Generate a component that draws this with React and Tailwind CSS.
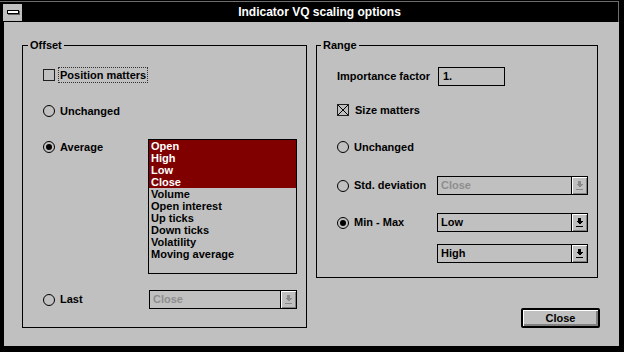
import React from "react";

function Radio({ checked }) {
  return (
    <span className="w-[12px] h-[12px] rounded-full border border-black flex items-center justify-center shrink-0 bg-[#c0c0c0]">
      {checked && <span className="w-[6px] h-[6px] rounded-full bg-black" />}
    </span>
  );
}

function Check({ checked }) {
  return (
    <span className="w-[12px] h-[12px] border border-[#202020] shrink-0 flex items-center justify-center">
      {checked && (
        <svg width="10" height="10" viewBox="0 0 10 10" shapeRendering="crispEdges">
          <line x1="0" y1="0" x2="10" y2="10" stroke="#000" strokeWidth="1" />
          <line x1="10" y1="0" x2="0" y2="10" stroke="#000" strokeWidth="1" />
        </svg>
      )}
    </span>
  );
}

function Arrow({ disabled }) {
  const c = disabled ? "#8a8a8a" : "#000";
  return (
    <svg width="7" height="9" viewBox="0 0 7 9" shapeRendering="crispEdges">
      <rect x="2" y="0" width="3" height="3" fill={c} />
      <polygon points="0,3 7,3 3.5,6.5" fill={c} />
      <rect x="0" y="8" width="7" height="1" fill={c} />
    </svg>
  );
}

function Combo({ text, disabled, w = "w-[151px]" }) {
  return (
    <div className={`${w} h-[19px] border border-black flex items-stretch bg-[#c0c0c0] shrink-0`}>
      <span className={`flex-1 pl-[3px] leading-[17px] ${disabled ? "text-[#8e8e8e]" : "text-black"}`}>{text}</span>
      <span className="w-[16px] border-l border-black flex items-center justify-center shadow-[inset_1px_1px_0_#ffffff,inset_-1px_-1px_0_#808080]">
        <Arrow disabled={disabled} />
      </span>
    </div>
  );
}

export default function App() {
  const items = ["Open", "High", "Low", "Close", "Volume", "Open interest", "Up ticks", "Down ticks", "Volatility", "Moving average"];
  return (
    <div className="w-[624px] h-[352px] bg-black flex flex-col font-['Liberation_Sans',Arial,sans-serif] font-bold text-[11px] text-black overflow-hidden">
      {/* title bar */}
      <div className="h-[22px] flex items-start pr-[5px]">
        <div className="flex-1 h-[21px] mt-[1px] border-t border-r border-[#6e6e6e] flex items-center">
          <div className="ml-[3px] w-[19px] h-[17px] bg-[#c0c0c0] flex items-center justify-center shrink-0">
            <span className="w-[12px] h-[4px] border border-black bg-white shadow-[1px_1px_0_#606060]" />
          </div>
          <div className="flex-1 text-center text-white text-[12px] leading-[14px] pr-[1px]">Indicator VQ scaling options</div>
        </div>
      </div>
      {/* body */}
      <div className="ml-[4px] mr-[5px] h-[324px] bg-[#c0c0c0] flex pl-[18px] pt-[17px]">
        {/* Offset */}
        <fieldset className="w-[285px] h-[289px] border border-black p-0 min-w-0 shrink-0">
          <legend className="ml-[5px] px-[2px] leading-[12px]">Offset</legend>
          <div className="pl-[20px]">
            <div className="mt-[16px] h-[16px] flex items-center">
              <Check />
              <span className="ml-[3px] h-[16px] px-[1px] border border-dotted border-[#303030] leading-[14px]">Position matters</span>
            </div>
            <div className="mt-[20px] h-[16px] flex items-center gap-[5px]">
              <Radio />
              <span>Unchanged</span>
            </div>
            <div className="mt-[20px] flex items-start">
              <div className="w-[105px] h-[16px] flex items-center gap-[5px] shrink-0">
                <Radio checked />
                <span>Average</span>
              </div>
              <div className="w-[149px] h-[135px] border border-black leading-[12px]">
                {items.map((t, i) => (
                  <div key={t} className={`h-[12px] pl-[2px] ${i < 4 ? "bg-[#800000] text-white" : ""}`}>{t}</div>
                ))}
              </div>
            </div>
            <div className="mt-[16px] h-[19px] flex items-center">
              <div className="w-[106px] flex items-center gap-[5px] shrink-0">
                <Radio />
                <span>Last</span>
              </div>
              <Combo text="Close" disabled w="w-[148px]" />
            </div>
          </div>
        </fieldset>
        {/* Right column */}
        <div className="ml-[9px] w-[284px] flex flex-col">
          <fieldset className="w-[282px] h-[239px] border border-black p-0 min-w-0">
            <legend className="ml-[4px] px-[2px] leading-[12px]">Range</legend>
            <div className="pl-[20px]">
              <div className="mt-[16px] h-[19px] flex items-center">
                <span className="w-[101px] shrink-0">Importance factor</span>
                <div className="w-[67px] h-[19px] border border-black pl-[4px] leading-[17px]">1.</div>
              </div>
              <div className="mt-[16px] h-[16px] flex items-center gap-[6px]">
                <Check checked />
                <span>Size matters</span>
              </div>
              <div className="mt-[21px] h-[16px] flex items-center gap-[5px]">
                <Radio />
                <span>Unchanged</span>
              </div>
              <div className="mt-[21px] h-[19px] flex items-center">
                <div className="w-[100px] flex items-center gap-[5px] shrink-0">
                  <Radio />
                  <span>Std. deviation</span>
                </div>
                <Combo text="Close" disabled />
              </div>
              <div className="mt-[18px] h-[19px] flex items-center">
                <div className="w-[100px] flex items-center gap-[5px] shrink-0">
                  <Radio checked />
                  <span>Min - Max</span>
                </div>
                <Combo text="Low" />
              </div>
              <div className="mt-[12px] h-[19px] flex items-center pl-[100px]">
                <Combo text="High" />
              </div>
            </div>
          </fieldset>
          <button className="self-end mt-[30px] w-[79px] h-[20px] border-2 border-black rounded-[2px] bg-[#c0c0c0] shadow-[inset_1px_1px_0_#ffffff,inset_-2px_-2px_0_#808080] text-[11px] font-bold leading-[14px] text-black">
            Close
          </button>
        </div>
      </div>
    </div>
  );
}
